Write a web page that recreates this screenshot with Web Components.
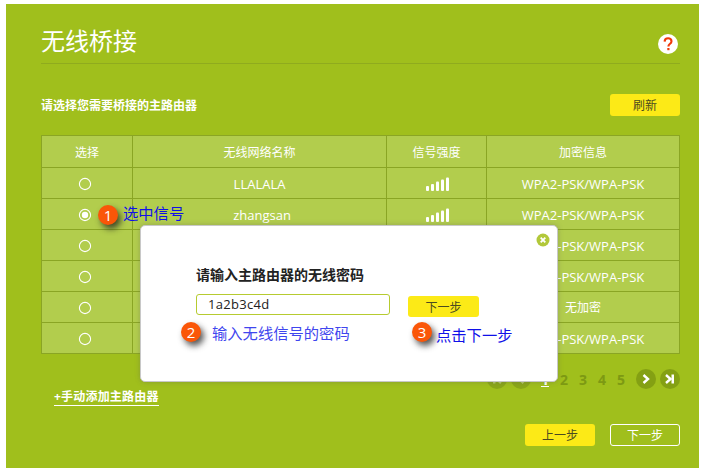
<!DOCTYPE html>
<html lang="zh">
<head>
<meta charset="utf-8">
<title>无线桥接</title>
<style>
    html, body { margin: 0; background: #fff; }
    body {
        width: 702px;
        height: 473px;
        overflow: hidden;
        font-family: "Open Sans", "Noto Sans CJK SC", sans-serif;
    }
</style>
</head>
<body>
<bridge-page>
    <span slot="title">无线桥接</span>
    <span slot="subtitle">请选择您需要桥接的主路由器</span>
    <wb-button slot="refresh">刷新</wb-button>
    <wb-table slot="table">
        <wb-row header><span>选择</span><span>无线网络名称</span><span>信号强度</span><span>加密信息</span></wb-row>
        <wb-row><wb-radio></wb-radio><span class="en">LLALALA</span><wb-signal></wb-signal><span class="en">WPA2-PSK/WPA-PSK</span></wb-row>
        <wb-row><wb-radio checked></wb-radio><span class="en" style="padding-left:5px">zhangsan</span><wb-signal></wb-signal><span class="en">WPA2-PSK/WPA-PSK</span></wb-row>
        <wb-row><wb-radio></wb-radio><span></span><wb-signal></wb-signal><span class="en">WPA2-PSK/WPA-PSK</span></wb-row>
        <wb-row><wb-radio></wb-radio><span></span><wb-signal></wb-signal><span class="en">WPA2-PSK/WPA-PSK</span></wb-row>
        <wb-row><wb-radio></wb-radio><span></span><wb-signal></wb-signal><span>无加密</span></wb-row>
        <wb-row><wb-radio></wb-radio><span></span><wb-signal></wb-signal><span class="en">WPA2-PSK/WPA-PSK</span></wb-row>
    </wb-table>
    <wb-pager slot="pager"></wb-pager>
    <span slot="add">+手动添加主路由器</span>
    <wb-button slot="prev">上一步</wb-button>
    <wb-button slot="next" outline>下一步</wb-button>
    <wb-modal slot="overlay">
        <span slot="label">请输入主路由器的无线密码</span>
        <span slot="value">1a2b3c4d</span>
        <wb-button slot="action" small>下一步</wb-button>
    </wb-modal>
    <wb-callout slot="overlay" num="1" drop="-2" style="left:98px;top:205px">选中信号</wb-callout>
    <wb-callout slot="overlay" num="2" gap="11" drop="1" soft style="left:181px;top:322px">输入无线信号的密码</wb-callout>
    <wb-callout slot="overlay" num="3" gap="4" drop="3" style="left:412px;top:322px">点击下一步</wb-callout>
</bridge-page>

<script>
class BridgePage extends HTMLElement {
    constructor() {
        super();
        this.attachShadow({ mode: 'open' });
        this.shadowRoot.innerHTML = `
            <style>
                :host {
                    display: block;
                    position: relative;
                    box-sizing: border-box;
                    width: 693px;
                    height: 464px;
                    margin: 4px 0 0 6px;
                    padding: 0 19px 0 35px;
                    background: #a0bf1c;
                    color: #fff;
                }
                .head {
                    display: flex;
                    align-items: center;
                    justify-content: space-between;
                    height: 59px;
                    border-bottom: 1px solid #8fab1e;
                }
                .title { font-size: 24px; line-height: 32px; margin-top: 14px; }
                .help {
                    width: 20px;
                    height: 20px;
                    margin: 21px 2px 0 0;
                }
                .bar {
                    display: flex;
                    align-items: center;
                    justify-content: space-between;
                    height: 22px;
                    margin-top: 30px;
                    font-size: 12px;
                    font-weight: 700;
                }
                .table { display: block; margin-top: 19px; }
                .pager { display: flex; justify-content: flex-end; margin-top: 15px; }
                .add {
                    display: block;
                    width: max-content;
                    margin: 0 0 0 13px;
                    font-size: 12px;
                    font-weight: 700;
                    line-height: 16px;
                    letter-spacing: .2px;
                    border-bottom: 1px solid #fff;
                }
                .foot { display: flex; justify-content: flex-end; gap: 15px; margin-top: 18px; }
                .overlay ::slotted(*) { position: absolute; }
            </style>
            <div class="head">
                <div class="title"><slot name="title"></slot></div>
                <svg class="help" viewBox="0 0 20 20">
                    <circle cx="10" cy="10" r="10" fill="#fff"/>
                    <path d="M6.6 7.6C6.7 5.3 8.2 4.2 10.1 4.2c2 0 3.4 1.2 3.4 3 0 1.4-.8 2.1-1.7 2.8-.9.7-1.4 1.2-1.4 2.4" fill="none" stroke="#f03a0a" stroke-width="2.1"/>
                    <rect x="9.3" y="14" width="2.2" height="2.2" fill="#f03a0a"/>
                </svg>
            </div>
            <div class="bar"><slot name="subtitle"></slot><slot name="refresh"></slot></div>
            <div class="table"><slot name="table"></slot></div>
            <div class="pager"><slot name="pager"></slot></div>
            <div class="add"><slot name="add"></slot></div>
            <div class="foot"><slot name="prev"></slot><slot name="next"></slot></div>
            <div class="overlay"><slot name="overlay"></slot></div>`;
    }
}

class WbButton extends HTMLElement {
    constructor() {
        super();
        this.attachShadow({ mode: 'open' });
        this.shadowRoot.innerHTML = `
            <style>
                :host {
                    display: flex;
                    align-items: center;
                    justify-content: center;
                    box-sizing: border-box;
                    width: 70px;
                    height: 22px;
                    border-radius: 3px;
                    background: #fcea17;
                    color: #4a4a20;
                    font-size: 12px;
                    font-weight: 400;
                }
                :host([small]) { width: 71px; height: 21px; }
                :host([outline]) {
                    background: transparent;
                    border: 1px solid #fff;
                    color: #fff;
                }
            </style>
            <slot></slot>`;
    }
}

class WbTable extends HTMLElement {
    constructor() {
        super();
        this.attachShadow({ mode: 'open' });
        this.shadowRoot.innerHTML = `
            <style>
                :host {
                    display: block;
                    width: 639px;
                    border: solid #8aa524;
                    border-width: 1px 1px 0 1px;
                    box-sizing: border-box;
                    background: #b2cd4d;
                }
            </style>
            <slot></slot>`;
    }
}

class WbRow extends HTMLElement {
    constructor() {
        super();
        this.attachShadow({ mode: 'open' });
        this.shadowRoot.innerHTML = `
            <style>
                :host {
                    display: grid;
                    grid-template-columns: 91px 254px 100px 1fr;
                    box-sizing: border-box;
                    height: 31px;
                    border-bottom: 1px solid #8aa524;
                    font-size: 12px;
                    color: #fff;
                }
                :host([header]) { height: 32px; }
                :host ::slotted(*) {
                    display: flex;
                    align-items: center;
                    justify-content: center;
                    border-right: 1px solid #8aa524;
                }
                :host ::slotted(:last-child) { border-right: 0; }
                :host ::slotted(.en) { font-size: 13px; padding-top: 1px; }
            </style>
            <slot></slot>`;
    }
}

class WbRadio extends HTMLElement {
    constructor() {
        super();
        this.attachShadow({ mode: 'open' });
        this.shadowRoot.innerHTML = `
            <style>
                :host { display: block; }
                svg { width: 14px; height: 14px; display: block; margin: 2px 4px 0 0; }
                .dot { display: none; }
                :host([checked]) .dot { display: inline; }
            </style>
            <svg viewBox="0 0 14 14">
                <circle cx="7" cy="7" r="5.6" fill="none" stroke="#fff" stroke-width="1.1"/>
                <circle class="dot" cx="7" cy="7" r="3.2" fill="#fff"/>
            </svg>`;
    }
}

class WbSignal extends HTMLElement {
    constructor() {
        super();
        this.attachShadow({ mode: 'open' });
        this.shadowRoot.innerHTML = `
            <style>
                :host { display: block; }
                svg { width: 24px; height: 14px; display: block; margin: 2px 0 0 2px; }
            </style>
            <svg viewBox="0 0 24 14" fill="#fff">
                <rect x="0" y="9" width="3" height="5" rx="1"/>
                <rect x="5" y="7" width="3" height="7" rx="1"/>
                <rect x="10" y="4.5" width="3" height="9.5" rx="1"/>
                <rect x="15" y="2.5" width="3" height="11.5" rx="1"/>
                <rect x="20" y="0.5" width="3" height="13.5" rx="1"/>
            </svg>`;
    }
}

class WbPager extends HTMLElement {
    constructor() {
        super();
        this.attachShadow({ mode: 'open' });
        this.shadowRoot.innerHTML = `
            <style>
                :host {
                    display: flex;
                    align-items: center;
                    height: 20px;
                    font-size: 14px;
                    font-weight: 700;
                    color: #7d9913;
                }
                .btn {
                    width: 20px;
                    height: 20px;
                    border-radius: 50%;
                    background: #84a013;
                    margin-left: 4px;
                }
                .btn svg { display: block; }
                .off { background: #8aa619; }
                .num { width: 19px; text-align: center; }
                .cur { color: #fff; text-decoration: underline; }
                .nums { display: flex; margin: 0 1.5px 0 4.5px; }
            </style>
            <div class="btn off"><svg viewBox="0 0 20 20" width="20" height="20"><path d="M14 6l-4.500 4 4.500 4" fill="none" stroke="#b8cc6a" stroke-width="2.4"/><rect x="6" y="5.5" width="2.500" height="9" fill="#b8cc6a"/></svg></div>
            <div class="btn off"><svg viewBox="0 0 20 20" width="20" height="20"><path d="M12.500 6L8 10l4.500 4" fill="none" stroke="#b8cc6a" stroke-width="2.4"/></svg></div>
            <div class="nums">
                <span class="num cur">1</span><span class="num">2</span><span class="num">3</span><span class="num">4</span><span class="num">5</span>
            </div>
            <div class="btn"><svg viewBox="0 0 20 20" width="20" height="20"><path d="M7.500 6l4.500 4-4.500 4" fill="none" stroke="#fff" stroke-width="2.4"/></svg></div>
            <div class="btn"><svg viewBox="0 0 20 20" width="20" height="20"><path d="M6 6l4.500 4L6 14" fill="none" stroke="#fff" stroke-width="2.4"/><rect x="11.500" y="5.500" width="2.500" height="9" fill="#fff"/></svg></div>`;
    }
}

class WbModal extends HTMLElement {
    constructor() {
        super();
        this.attachShadow({ mode: 'open' });
        this.shadowRoot.innerHTML = `
            <style>
                :host {
                    display: block;
                    left: 134px;
                    top: 221px;
                    width: 418px;
                    height: 157px;
                    box-sizing: border-box;
                    padding: 40px 0 0 55px;
                    background: #fff;
                    border: 1px solid #c8c8c8;
                    border-radius: 5px;
                    box-shadow: 0 0 5px rgba(90, 90, 90, .35);
                    color: #222;
                }
                .close { position: absolute; right: 7px; top: 7px; width: 14px; height: 14px; }
                .label { font-size: 14px; font-weight: 700; line-height: 18px; }
                .form { display: flex; align-items: flex-start; gap: 18px; margin-top: 10px; }
                .input {
                    box-sizing: border-box;
                    width: 194px;
                    height: 21px;
                    padding-left: 11px;
                    border: 1px solid #b6cb30;
                    border-radius: 3px;
                    font-size: 13px;
                    letter-spacing: .3px;
                    line-height: 19px;
                }
                .action { margin-top: 2px; }
            </style>
            <svg class="close" viewBox="0 0 14 14">
                <circle cx="7" cy="7" r="6.5" fill="#b2c83a"/>
                <path d="M4.700 4.700l4.600 4.600M9.300 4.700l-4.600 4.600" stroke="#fff" stroke-width="1.8"/>
            </svg>
            <div class="label"><slot name="label"></slot></div>
            <div class="form">
                <div class="input"><slot name="value"></slot></div>
                <div class="action"><slot name="action"></slot></div>
            </div>`;
    }
}

class WbCallout extends HTMLElement {
    constructor() {
        super();
        this.attachShadow({ mode: 'open' });
        this.shadowRoot.innerHTML = `
            <style>
                :host {
                    display: flex;
                    gap: 5px;
                    color: #1010e8;
                    font-size: 15.3px;
                    line-height: 20px;
                    white-space: nowrap;
                    margin-left: -6px;
                    margin-top: -4px;
                }
                :host([soft]) { color: #3f46ee; }
                .num {
                    flex: none;
                    width: 20px;
                    height: 20px;
                    border-radius: 50%;
                    background: #fa5608;
                    color: #fff;
                    font-size: 15px;
                    text-align: center;
                    box-shadow: 3px 4px 6px rgba(30, 30, 30, .75);
                }
            </style>
            <span class="num"></span><span class="text"><slot></slot></span>`;
        this.shadowRoot.querySelector('.num').textContent = this.getAttribute('num');
        const gap = this.getAttribute('gap');
        if (gap) this.style.gap = gap + 'px';
        const drop = this.getAttribute('drop');
        if (drop) this.shadowRoot.querySelector('.text').style.marginTop = drop + 'px';
    }
}

customElements.define('bridge-page', BridgePage);
customElements.define('wb-button', WbButton);
customElements.define('wb-table', WbTable);
customElements.define('wb-row', WbRow);
customElements.define('wb-radio', WbRadio);
customElements.define('wb-signal', WbSignal);
customElements.define('wb-pager', WbPager);
customElements.define('wb-modal', WbModal);
customElements.define('wb-callout', WbCallout);
</script>
</body>
</html>
